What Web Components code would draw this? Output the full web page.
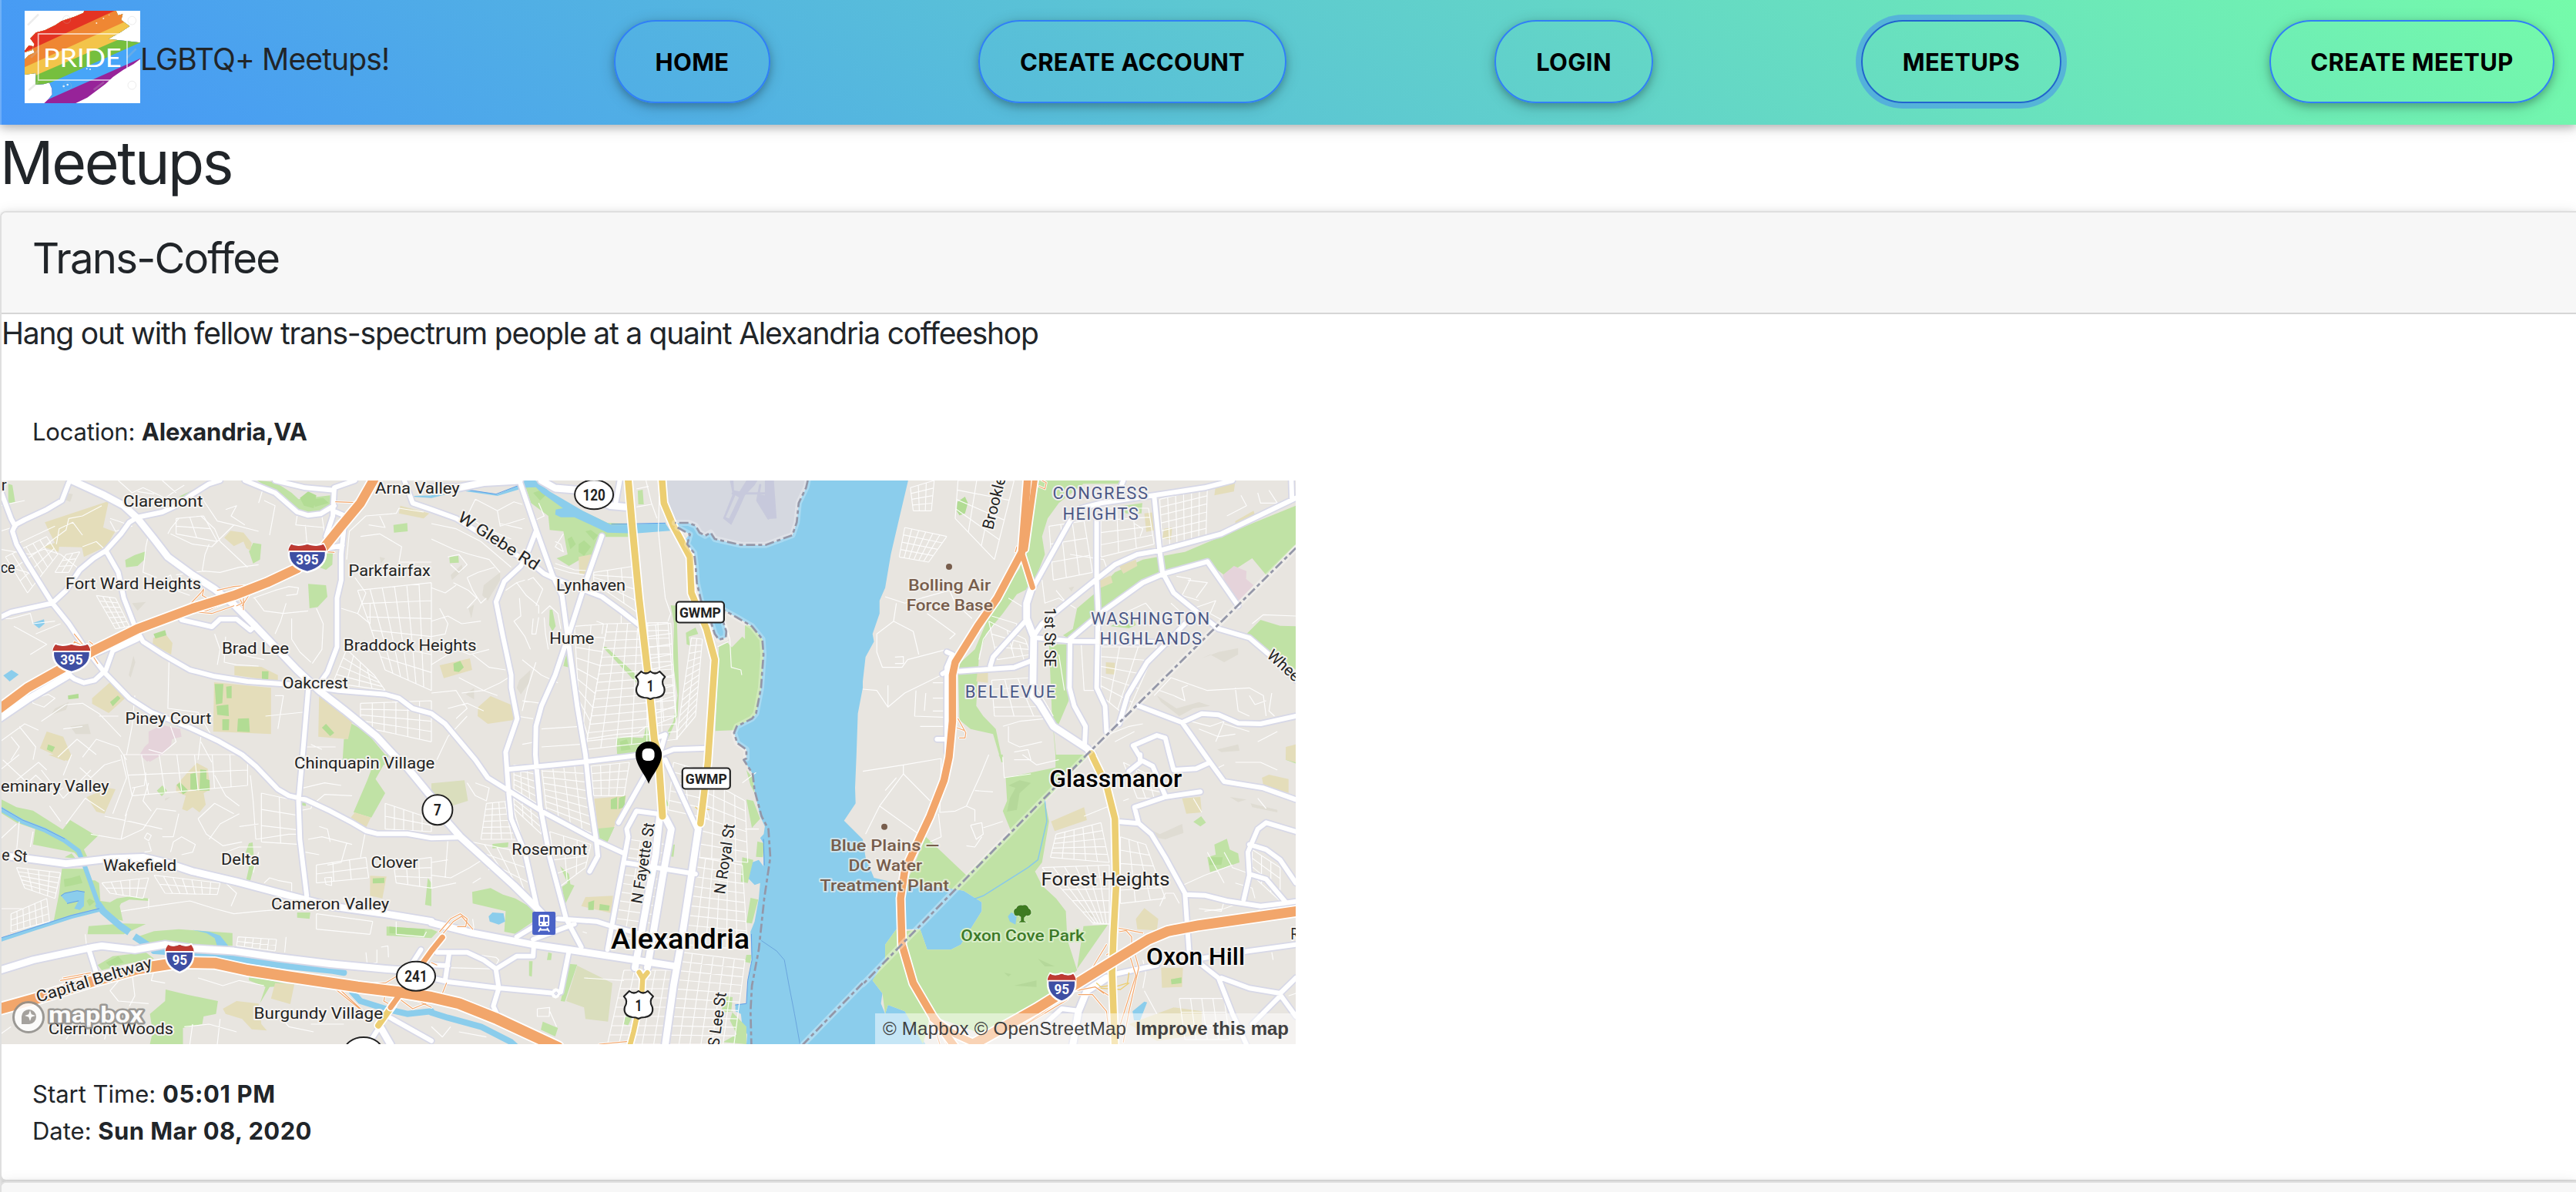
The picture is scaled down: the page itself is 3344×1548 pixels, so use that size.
<!DOCTYPE html>
<html lang="en">
<head>
<meta charset="utf-8">
<title>LGBTQ+ Meetups!</title>
<style>
html,body{margin:0;padding:0;height:1548px;overflow:hidden;background:#fff}
body{font-family:Inter,"Liberation Sans",sans-serif;font-size:31px;line-height:48px;color:#212529}
</style>
</head>
<body>
<meetups-app></meetups-app>
<script>
const define=(name,html,setup)=>customElements.define(name,class extends HTMLElement{
  constructor(){super();this.attachShadow({mode:'open'}).innerHTML=html;}
  connectedCallback(){if(setup)setup(this.shadowRoot,this);}
});

define('pride-logo',`<style>:host{display:block;width:150px;height:120px;flex:none}svg{display:block}</style>
<svg width="150" height="120" viewBox="96 42 450 360">
<defs><clipPath id="c"><path d="M328 42H452L460 60L478 55L472 78L505 102L470 125L422 152L480 158L546 166V230L520 250L480 272L440 300L410 328L380 350L340 380L295 402H172L190 385L203 368L202 345L192 322L170 328L138 330L140 285L96 291V232L112 215L135 205L128 190L134 172L118 150L140 127L175 118L215 98L240 82L290 65L325 50Z M96 198L112 178L128 180L126 195L96 204Z"/></clipPath></defs>
<rect x="96" y="42" width="450" height="360" fill="#fff"/>
<g clip-path="url(#c)"><rect x="96" y="42" width="450" height="360" fill="#972399"/>
<path d="M96 42H546V228L180 391L96 428Z" fill="#47a5f8"/><path d="M96 42H546V166L96 367Z" fill="#76bf3e"/>
<path d="M96 42H546V118L96 312Z" fill="#f3c44a"/><path d="M96 42H546V58L96 262Z" fill="#ef8733"/><path d="M96 42H446L96 203Z" fill="#e43323"/></g>
<g fill="#fff" opacity=".85"><circle cx="376" cy="90" r="3"/><circle cx="403" cy="72" r="3"/><circle cx="425" cy="58" r="2"/><circle cx="338" cy="268" r="3"/><circle cx="351" cy="270" r="3"/><circle cx="248" cy="336" r="4"/><circle cx="263" cy="330" r="4"/></g>
<g fill="none" stroke="#bbb" stroke-opacity=".28" stroke-width="3"><circle cx="514" cy="80" r="16"/><circle cx="514" cy="332" r="16"/><circle cx="260" cy="76" r="15"/><circle cx="262" cy="335" r="16"/><path d="M108 98L150 56M112 352L150 318M365 350L405 320M495 225L530 190M120 224L150 196" stroke-width="8"/></g>
<rect x="149" y="132" width="346" height="180" fill="none" stroke="#fff" stroke-opacity=".72" stroke-width="5"/>
<text x="168" y="260" font-family="Lato,sans-serif" font-size="101" font-weight="400" fill="#fff" textLength="304" lengthAdjust="spacingAndGlyphs">PRIDE</text>
</svg>`);

define('nav-pill',`<style>
:host{display:flex;box-sizing:border-box;height:108px;border:2px solid #307ff6;border-radius:54px;align-items:center;justify-content:center;color:#000;font-weight:700;font-size:31px;line-height:48px;letter-spacing:.3px;padding-top:2px;white-space:nowrap;box-shadow:0 4px 10px rgba(0,0,0,.2),0 4px 20px rgba(0,0,0,.18)}
:host([active]){border-color:#2164cf;box-shadow:0 0 0 7px rgba(66,133,244,.5)}
</style><slot></slot>`,(r,e)=>{e.style.width=e.getAttribute('width')+'px'});

define('site-nav',`<style>
:host{display:flex;box-sizing:border-box;height:162px;padding:0 28px 0 30px;border-left:2px solid rgba(255,255,255,.22);background:linear-gradient(40deg,#4596f8,#75fbaa) border-box;box-shadow:0 4px 10px rgba(0,0,0,.2),0 4px 20px rgba(0,0,0,.14);justify-content:space-between;align-items:flex-start;position:relative}
.brand{display:flex;padding-top:14px;font-size:39px;line-height:60px;letter-spacing:-.85px;white-space:nowrap}
.brand span{padding:33px 0 0 0;line-height:60px}
nav{display:flex;gap:270px;padding-top:26px}
</style>
<div class="brand"><pride-logo></pride-logo><span>LGBTQ+ Meetups!</span></div>
<nav><nav-pill width="203">HOME</nav-pill><nav-pill width="400">CREATE ACCOUNT</nav-pill><nav-pill width="206">LOGIN</nav-pill><nav-pill width="260" active>MEETUPS</nav-pill><nav-pill width="370">CREATE MEETUP</nav-pill></nav>`);

define('meetup-card',`<style>
:host{display:block;box-sizing:border-box;border:2px solid #dfdfdf;border-right:0;border-radius:8px 0 0 8px;background:#fff;box-shadow:0 4px 10px rgba(0,0,0,.16),0 4px 20px rgba(0,0,0,.12)}
header{box-sizing:border-box;height:132px;background:#f7f7f7;border-bottom:2px solid #d6d6d6;padding:26px 40px 0;border-radius:6px 0 0 0;font-size:54.5px;line-height:67px;letter-spacing:-1.8px}
</style><header><slot name="title"></slot></header><slot></slot>`);

/* Tiles of the street map: origin and scale of each drawing sheet. */
const T={a:[0,610,2.8],b:[560,610,2.8],c:[1120,610,2.75],d:[0,980,2.8],e:[560,980,2.8],f:[1120,980,2.75]};
const pt=(t,x,y)=>[+(T[t][0]+x/T[t][2]-2).toFixed(1),+(T[t][1]+y/3-624).toFixed(1)];
/* With split set, a change of tile also starts a new subpath. */
function P(s,split){let t='a',m=true,o='';for(const k of s.trim().split(/\s+/)){
  if(T[k]){t=k;if(split)m=true;}else if(k==='|')m=true;else if(k==='Z'){o+='Z';m=true;}
  else{const[x,y]=k.split(',').map(Number),q=pt(t,x,y);o+=(m?'M':'L')+q;m=false;}}return o;}
const fill=(c,s,joined)=>`<path d="${P(s,!joined)}" fill="${c}"/>`;
const line=(c,w,s,x='')=>`<path d="${P(s)}" fill="none" stroke="${c}" stroke-width="${w}" stroke-linejoin="round" stroke-linecap="round" ${x}/>`;
/* Street grid inside a quadrilateral, corners given clockwise. */
function grid(t,q,n,m){const c=q.split(' ').map(p=>pt(t,...p.split(',').map(Number)));let o='';
  const l=(a,b,k)=>[a[0]+(b[0]-a[0])*k,a[1]+(b[1]-a[1])*k].map(v=>v.toFixed(1));
  for(let i=0;i<=n;i++)o+='M'+l(c[0],c[1],i/n)+'L'+l(c[3],c[2],i/n);
  for(let j=0;j<=m;j++)o+='M'+l(c[0],c[3],j/m)+'L'+l(c[1],c[2],j/m);
  return `<path d="${o}"/>`;}
const PARK='#c0e2a5',PITCH='#b2dc94',SCHOOL='#e4ddba',WATER='#8bcdec',DIM='#dfdcd3';
const coastN='b 1368,42 1362,70 1335,130 1328,205 1312,255 1215,293 1125,293 1030,270 1015,245 995,257 975,245 960,218 935,207 885,207';
const coastM='b 895,225 940,252 930,290 955,325 960,370 965,440 980,510 1015,590 1030,640 1045,662 1070,655 1072,630 1060,590 1065,548 1110,575 1165,610 1203,660 1207,720 1198,850 1180,950 1165,970 1110,1000 1100,1025 1112,1065 1145,1090 1145,1125';
const land=[
 fill(WATER,coastN+' '+coastM+' e 1135,20 1168,75 1175,140 1195,240 1212,280 1208,310 1195,325 1210,350 1207,435 1190,410 1165,420 1150,480 1175,508 1195,500 1190,560 1175,650 1160,690 1165,800 1150,880 1145,970 1105,975 1105,1000 1125,1010 1130,1060 1148,1090 1145,1130 f 225,1130 150,1000 90,975 80,1010 65,970 70,930 35,880 80,800 80,740 120,680 205,680 230,760 315,760 350,740 425,610 425,575 360,530 305,520 120,500 40,480 10,400 0,330 e 1500,257 1542,190 1540,130 1545,0 b 1550,950 1568,850 c 0,825 10,730 40,670 35,640 60,560 60,510 80,460 100,330 130,190 162,42 Z',true),
 fill('#d5d8e0','b 855,42 1368,42 1362,70 1335,130 1328,205 1312,255 1215,293 1125,293 1030,270 1015,245 995,257 975,245 960,218 935,207 885,205 855,120 Z'),
 fill('#c7c9dc','b 1085,42 1095,95 1060,190 1090,215 1115,160 1140,100 1175,60 1185,42 1145,42 1120,85 1100,80 1098,42 Z | 1212,42 1245,42 1255,190 1225,192 1185,120 1190,95 1212,100 Z'),
 fill('#d5d8e0','b 1105,100 1118,108 1082,190 1070,185 Z'),
 line('#c7c9dc',3,'b 1095,92 1215,92 | 1195,60 1185,120 1225,190'),
 // parks
 fill(PARK,'a 30,55 45,60 55,125 30,132 | 935,42 1000,48 1060,90 1085,115 1200,100 1205,140 1165,165 1120,172 1080,160 1030,100 960,60 | 455,352 490,332 530,318 525,350 500,375 458,380 | 905,318 920,285 950,290 945,350 920,365 | 1120,445 1185,450 1190,495 1155,535 1125,540 | 1160,380 1180,330 1210,320 1208,370 1185,390 | 1270,985 1330,1020 1400,1110 1400,1150 1245,1140 1250,1050 1265,1045 | 1430,215 1480,208 1482,240 1432,245 | 650,105 720,70 755,48 730,80 680,110'),
 fill(PARK,'d 0,172 60,205 120,218 228,292 255,255 340,310 360,312 305,370 318,400 290,405 270,382 120,350 128,290 60,265 0,225 | 225,445 310,445 320,490 345,490 360,500 365,570 400,575 425,560 470,553 540,560 540,570 470,565 440,580 435,590 447,648 420,640 375,605 330,605 195,650 215,540 | 235,400 260,385 275,405 | 322,668 450,658 530,660 450,700 318,700 | 485,715 560,688 650,680 845,695 845,745 540,745 | 355,820 410,785 530,770 560,795 440,820 370,840 | 570,140 590,120 607,140 588,162 | 905,345 918,342 925,430 910,490 895,488 905,440 890,390 | 1370,0 1415,0 1365,95 1400,150 1350,245 1285,225 1335,100 | 1080,615 1128,615 1125,640 1080,635 | 1405,670 1568,680 1568,715 1405,705 | 1095,185 1112,185 1112,200 1098,198 | 1555,480 1568,500 1568,590 1545,585 | 602,915 680,935 792,960 785,1010 740,1020 735,1050 665,1065 665,1128 545,1128 555,1080 545,1010 600,960 | 905,862 1070,900 980,905 945,968 965,905 905,880'),
 fill(PARK,'b 320,42 375,42 470,120 640,207 715,210 715,262 630,262 580,350 540,350 500,375 455,345 495,330 480,240 430,235 425,180 362,130 345,75 | 750,82 768,78 772,135 752,135 | 430,545 440,545 452,610 440,630 428,605 | 925,635 960,615 970,640 935,650 940,685 928,680 | 870,528 895,530 893,600 900,860 895,960 855,1060 850,1035 880,980 895,880 878,750 882,600 | 1140,605 1165,610 1203,660 1207,720 1198,850 1180,950 1165,970 1110,1000 1100,1015 1032,1018 1045,690 1075,672 1092,692 1130,650 1140,660 | 622,690 635,690 745,800 745,830 | 672,1040 770,1045 782,995 800,1060 760,1110 675,1108 | 65,338 98,336 100,362 67,364 | 485,740 497,700 500,770 480,765'),
 fill(PARK,'e 148,535 215,520 260,545 305,560 370,600 370,650 305,698 265,690 270,610 150,580 | 0,680 22,690 0,715 | 500,815 530,818 485,962 470,960 | 425,770 438,775 435,800 420,800 | 355,805 368,805 365,865 355,862 | 405,1040 460,1065 450,1098 398,1072 | 468,435 500,465 505,505 520,510 485,585 475,515 495,500 | 222,348 280,342 278,360 222,365 | 605,288 665,282 640,340 610,325 | 865,352 885,350 880,398 862,395 | 853,170 865,200 855,200 | 1145,175 1170,180 1195,250 1165,285 | 1185,338 1210,345 1205,400 1180,398 | 1130,400 1170,410 1150,500 1125,495 | 1160,558 1188,565 1165,658 1145,655 | 1145,780 1163,780 1160,812 1140,808 | 1060,940 1095,945 1090,1000 1145,1060 1145,1128 1060,1120 1110,1090 1085,1035 1095,1000 1055,1005 | 1145,60 1168,90 1175,150 1160,120 | 705,1015 730,1020 715,1055 700,1050'),
 fill(PARK,'c 630,42 920,42 918,55 788,55 700,130 660,190 640,260 650,330 605,455 550,485 500,560 440,640 415,720 405,920 430,960 475,1010 500,1140 495,1140 465,1030 385,1010 345,975 340,760 400,700 470,520 560,385 575,330 | 905,145 998,130 995,170 940,170 | 1546,140 1546,290 1440,410 1390,345 1340,380 1290,410 1240,370 1225,365 1080,405 980,445 860,560 740,660 715,645 750,620 765,540 830,480 900,400 1000,350 1150,320 1400,205 | 1370,640 1420,585 1490,608 1546,610 1546,780 1450,710 | 885,610 960,560 975,605 950,618 | 665,680 735,680 735,900 700,990 680,1000 690,1110 790,1140 690,1140 675,950'),
 fill(PARK,'f 485,0 500,0 498,30 | 688,0 790,0 800,10 745,70 650,180 665,260 640,420 615,455 640,510 690,560 725,610 730,720 765,840 640,960 430,1090 230,1010 160,850 140,690 205,680 230,760 315,760 350,740 425,610 425,575 360,530 305,520 160,490 225,320 370,470 530,300 500,220 515,180 510,90 688,50 | 35,880 80,800 80,740 120,680 150,800 240,1020 215,1128 150,1000 90,975 80,1010 70,930 | 788,668 875,662 765,835 | 1180,262 1208,240 1225,265 1205,280 | 1255,350 1300,328 1310,370 1340,385 1345,420 1240,458 1230,400 1260,390 | 1510,0 1546,0 1546,35 1510,20'),
 // pitches and darker lawns
 fill(PITCH,'a 865,970 905,968 908,1022 862,1020 | 247,880 285,873 286,890 248,895 | 1090,110 1120,85 1150,100 1140,150 1105,140 | 1135,115 1175,110 1195,130 1145,145'),
 fill(PITCH,'d 1415,670 1545,680 1540,705 1415,695 | 232,485 260,480 290,470 300,500 260,510 235,515 | 315,570 325,560 345,572 325,590 | 385,810 430,785 450,810 400,825 b 370,90 395,80 415,100 395,120 | 495,270 510,260 525,290 505,310 | 535,290 555,275 580,300 555,335 535,320 | 560,240 580,235 605,255 590,275 | 685,1060 710,1050 725,1090 690,1095'),
 fill(PITCH,'c 338,125 365,105 375,130 365,170 345,178 335,160 | 885,590 970,600 950,615 f 1237,400 1285,400 1280,430 1237,430'),
 // schools, dry land
 fill(SCHOOL,'a 163,205 395,122 375,225 418,242 385,300 305,340 298,302 215,300 213,320 155,300 200,285 178,240 | 815,265 838,238 885,245 915,285 910,315 895,305 885,280 850,298 | 557,655 605,645 627,675 622,720 555,680 | 852,765 950,768 1010,800 1010,825 852,800 | 778,828 985,850 985,1030 775,1020 | 335,890 400,828 455,890 395,948 335,912 | 170,1020 230,1040 260,1115 245,1135 145,1085 | 1160,870 1220,910 1280,980 1265,1050 1157,1040 | 1455,140 1560,170 1540,190 1450,170'),
 fill(SCHOOL,'d 640,120 690,60 715,32 755,55 765,135 740,150 748,195 725,225 700,205 680,220 662,212 675,160 640,145 | 315,165 395,130 420,135 380,230 350,222 | 175,0 260,0 235,25 | 1290,225 1348,245 1330,285 1275,245 | 1345,472 1405,475 1390,560 1345,550 | 1000,890 1070,895 1055,972 985,950 | 810,990 860,960 940,970 950,1050 970,1075 915,1070 880,1030 820,1010'),
 fill(SCHOOL,'b 30,762 140,735 148,780 45,812 | 170,925 215,882 300,920 300,975 205,990 168,960 | 535,340 580,330 590,355 560,410 538,405 e 592,172 708,160 695,210 640,335 600,300 600,240 | 560,555 660,550 655,618 545,590'),
 fill(SCHOOL,'c 1260,60 1330,42 1325,85 1255,100 | 1005,170 1045,165 1045,235 1012,242 | 1075,230 1105,225 1100,272 1070,268 | 1330,200 1395,160 1405,195 1330,222 | 915,375 975,350 980,375 930,405 | 840,435 885,412 892,440 850,460 | 868,750 900,752 898,798 868,795 | 410,785 447,785 447,830 405,825 | 1510,1080 1546,1070 1546,1140 1510,1130 f 672,260 790,205 800,255 685,298 | 1140,170 1205,165 1210,225 1155,230 | 975,640 1005,598 1055,640 1050,685 980,680 | 1065,830 1143,830 1140,905 1068,908 | 1425,90 1450,78 1520,95 1520,150 1430,120 | 950,1050 1110,985 1210,1000 1210,1090 1050,1115'),
 fill(PITCH,'d 692,75 715,70 718,140 692,135 | 728,58 750,60 750,95 762,100 762,140 725,140 | 642,118 655,108 685,140 665,155 | 1355,482 1397,480 1397,500 1355,502 a 558,640 600,625 605,645 565,658 | 952,785 976,785 975,818 952,818 | 400,905 428,880 438,890 410,922 | 1170,1005 1185,990 1215,1025 1200,1038 | 175,1070 200,1080 190,1100 170,1090 | 780,835 812,835 808,910 785,915 | 822,845 842,842 842,890 824,890 | 787,920 830,915 832,960 790,955 | 808,972 833,972 832,1015 808,1015 | 865,970 905,968 908,1022 862,1020 b 80,755 105,745 118,770 100,788 82,785 e 652,175 675,165 675,212 652,212 | 682,168 705,160 702,205 680,212 | 570,575 592,568 590,605 570,605 | 612,582 648,588 645,608 610,605 f 1100,875 1138,868 1138,890 1102,895'),
 fill(PARK,'e 605,288 665,282 640,340 610,325'),
 fill('#dadebd','e 0,112 120,100 133,180 60,205 0,195 | 530,822 658,890 642,1040 560,1030 555,985 490,960'),
 fill('#e5d3da','a 540,1020 590,995 655,1010 660,1040 625,1050 622,1075 590,1110 545,1138 508,1110 525,1080 540,1065 c 1285,410 1325,375 1370,395 1368,425 1395,450 1340,515 1300,470 d 508,0 560,0 535,28'),
 fill(DIM,'a 235,90 265,95 255,125 230,115 | 200,930 250,905 240,935 185,955 | 485,725 492,750 475,810 468,800 | 255,1000 320,990 330,1030 275,1030 | 1380,340 1400,345 1385,365 | 480,520 530,515 500,550 b 70,410 110,370 115,390 75,430 | 190,450 250,400 250,430 205,510 185,490 | 320,820 360,780 355,830 325,875 310,850 | 135,540 155,525 145,580 | 125,875 155,850 155,895 d 600,170 620,165 600,180 c 1210,735 1270,710 1340,695 1340,720 1290,750 1240,720 | 1050,880 1120,930 1200,905 1240,920 1180,930 1130,960 1065,905 | 735,460 755,455 745,475 | 1265,1090 1340,1070 1345,1095 1280,1100'),
 fill('#b5d89a','f 520,120 560,100 600,110 560,150 550,215 515,222 525,170 545,130 | 505,850 530,855 520,865 | 540,900 620,880 620,905 | 625,795 685,825 650,825'),
 fill(DIM,'f 995,275 1060,310 1140,270 1145,305 1080,330 1030,320 | 1310,165 1370,175 1340,185 | 1385,190 1480,215 1480,225 1390,205 | 770,580 835,635 810,630'),
 // small water
 fill(WATER,'a 118,598 160,583 162,600 142,618 | 12,802 42,780 68,798 35,825 | 1505,102 1568,100 1568,110 1505,106 b 0,98 110,75 240,95 320,60 325,42 378,42 430,85 550,160 655,215 850,208 868,238 740,248 640,245 520,185 470,185 450,175 452,155 478,150 400,90 380,68 340,70 240,102 110,82 0,110 | 920,275 935,255 945,262 930,285 d 222,550 235,540 280,530 307,535 305,590 290,605 270,600 285,570 245,580 | e 208,630 222,615 262,618 268,650 245,662 212,650 f 518,630 530,615 550,625 545,662 525,650 | 963,1000 1005,962 1015,965 990,1035 968,1035'),
 line('#5f9ee8',1,'b 110,75 235,95 320,60 | 655,212 850,208 | 940,252 930,290 955,325 | d 222,550 235,540 280,530 307,535 | 245,580 285,570 | e 1163,700 1165,800 1150,880 1145,970 1105,975 | 1207,330 1210,430'),
 line(WATER,6,'d 0,210 80,260 165,295 235,335 285,375 310,440 340,530 360,590'),
 line(WATER,9,'d 355,580 375,610 440,670 470,692','style="stroke-linecap:butt"'),line(WATER,9,'d 488,708 540,745 570,765','style="stroke-linecap:butt"'),
 line(WATER,5,'d 0,722 120,680 260,632 360,605'),
 line('#6ba2e8',1,'d 0,204 80,254 165,290 235,328 | 0,715 120,675 260,626 360,600'),
 line(WATER,8,'d 560,765 700,775 850,795 1050,825 1210,842 1250,850 | 1280,925 1310,960 1400,990 1480,1010 1568,1000 e 0,1005 60,1025 180,1060 290,1120 320,1150'),
 fill(WATER,'d 700,683 760,690 800,705 830,745 790,748 780,715 750,695'),
 line('#88c8ea',1.5,'f 650,180 657,260 625,410 590,440 430,550 400,562'),
 line('#6aa5dd',1,'e 1200,725 1255,765 1283,800 1300,900 1320,1010 1340,1130')
].join('');

const small=`a 430,42 480,90 520,70 600,110 640,80 670,60 | 500,85 560,95 | 590,42 640,90 | 620,250 700,290 770,300 850,215 940,240 | 730,180 780,230 800,280 850,330 900,380 | 610,250 620,230 650,190 | 740,120 790,200 870,220 | 820,155 860,140 840,180 890,215 | 980,255 1000,140 960,120 | 940,130 960,60 990,90 | 1080,180 1075,215 1175,225 | 1110,215 1115,280 | 1170,180 1180,250 | 640,410 700,400 740,395 800,400 870,380 940,370 | 735,395 745,330 760,290 | 590,430 620,410 640,470 690,490 | 1040,520 1020,590 1000,640 | 925,500 960,550 1030,560 1120,550 | 1150,540 1175,600 1170,700 1135,755 | 1060,580 1060,660 1090,710 1130,750 | 920,500 1000,470 1050,455 1085,460 1080,485 1040,490 | 1260,350 1270,240 1330,180 1440,170 1450,150 1540,165 | 1310,260 1380,250 1460,300 1450,360 1568,360 | 1340,215 1400,225 1380,180 | 1290,420 1330,480 1300,560 1240,540 | 1345,520 1345,600 1300,560 | 615,720 610,930 720,945 765,1030 | 780,640 800,700 790,760 | 820,650 815,750 860,760 940,765 | 870,720 960,740 | 1000,880 1030,880 1010,1010 | 965,960 1100,945 | 490,880 480,1000 460,1110 | 110,880 120,910 160,925 200,890 175,875 145,885 | 0,1060 90,990 140,1015 | 40,1040 70,1080 40,1130 | 70,1000 130,1080 120,1130 | 150,980 240,915 300,910 360,950 440,1040 | 210,1120 280,1050 350,1110 | 230,1010 300,1000 | 300,1120 350,1050 430,1080 460,1130 | 360,960 430,960 | 540,1090 590,1105 640,1060 620,1000 | 0,580 40,580 110,560 120,600 200,590 | 50,610 170,680 110,720 | 130,640 220,600 | 0,310 110,330 160,310 220,330 280,380 | 0,370 100,400 140,430 | 60,290 200,220 | 170,290 240,235 250,190 300,180 370,140 | 205,290 215,230 265,205 300,255 | 300,300 350,280 380,310 | 400,190 430,200 480,220 420,240 400,200 | 0,240 60,220 | 0,140 90,120 | 1100,1080 1220,1080 | 730,1060 770,1140 | 720,1130 730,1040 | 1130,1070 1170,1090 | 545,230 530,300 520,400 570,420
 b 160,115 130,180 200,230 290,270 | 160,115 240,160 300,125 330,135 | 240,160 250,220 340,190 | 250,210 330,230 | 0,210 90,230 180,280 290,380 | 0,270 80,310 140,330 210,350 250,400 | 60,340 100,330 130,370 100,400 70,370 | 130,420 170,400 230,380 | 130,420 150,470 180,520 200,500 | 80,440 135,470 165,500 130,540 | 0,460 50,480 90,450 | 0,590 60,570 110,600 180,590 | 30,540 60,600 50,640 0,650 | 270,470 310,440 345,490 390,530 390,560 | 310,440 340,430 | 350,430 370,420 405,465 380,530 | 320,500 325,570 300,590 340,650 360,700 | 370,580 365,640 380,640 390,575 | 410,575 415,640 425,700 | 400,560 430,530 460,560 470,620 | 0,760 90,700 140,720 210,700 | 150,720 210,770 270,780 | 330,740 400,800 460,830 | 380,750 350,850 330,940 | 100,810 190,860 250,830 280,810 | 110,870 190,860 240,880 | 0,870 90,860 130,930 90,970 | 60,930 130,910 190,940 | 330,900 400,910 | 310,960 370,970 | 330,1070 380,1060 | 20,1130 60,1040 130,960 | 440,380 500,400 560,410 | 450,365 520,390 590,395 | 390,130 410,180 370,200 | 480,250 450,300 480,320 470,290 450,280 | 830,42 825,240 850,500 870,560 860,590 | 780,42 800,130 820,190 | 745,75 790,65 | 745,145 800,135 | 1065,590 1085,660 1090,770 1125,780 1128,800 | 1080,670 1040,690 | 620,640 625,600 600,590 | 690,540 690,600 | 560,1050 680,1030 750,1025 780,1000 | 400,1080 540,1070 | 400,1010 540,1000
 c 0,855 50,860 90,925 150,870 300,790 | 90,840 90,925 | 80,495 150,520 210,500 310,470 330,520 390,580 | 120,520 110,590 50,640 50,710 70,770 140,770 160,740 300,700 | 110,590 180,630 200,720 | 230,560 280,600 330,640 310,660 | 115,730 145,728 145,755 115,755 | 190,860 185,960 300,965 | 205,1000 290,1000 | 225,870 220,940 | 250,830 290,830 | 250,890 290,890 | 250,940 290,940 | 500,1000 560,980 650,970 | 540,1100 590,1090 600,1130 540,1130 | 520,1000 520,1060 560,1080 640,1060 | 460,570 550,600 530,700 | 520,500 580,540 | 415,740 430,660 470,600 | 560,680 575,740 | 1120,415 1170,425 1140,490 1200,510 | 1160,430 1230,440 1190,500 | 1180,540 1260,510 1240,560 1290,590 | 1100,520 1180,600 | 930,560 1010,520 1070,600 | 640,430 650,520 700,500 760,540 | 690,470 720,510 | 780,680 790,860 830,860 | 1040,880 1100,810 1230,860 1380,850 1430,880 1440,960 | 1060,860 1110,880 1150,900 1140,850 1160,840 | 1330,850 1340,940 1380,960 | 1380,880 1400,915 1440,900 | 1460,870 1450,940 1470,960 | 1170,980 1240,1000 1290,980 1260,1060 | 1290,990 1380,1020 | 1200,1010 1270,1040 1330,1030 | 1410,1060 1480,1020 | 1350,100 1370,140 1300,180 | 1410,90 1420,130 1480,130 1450,80 | 970,210 1000,230 990,260 | 880,1030 950,1000 1000,990 | 900,1060 970,1020 | 740,330 860,350 870,380 | 1390,600 1430,565 1546,570 | 700,720 720,860
 d 0,60 70,0 | 10,20 100,110 130,80 200,150 230,130 | 60,100 140,30 170,60 | 230,80 260,0 | 290,50 330,90 380,40 440,20 | 150,60 230,170 330,60 | 180,200 220,260 | 240,270 310,170 380,220 | 60,270 0,330 | 70,260 60,380 | 120,300 110,360 | 380,240 470,260 590,290 | 440,0 460,90 410,230 | 460,230 440,330 330,310 | 490,130 455,240 | 540,110 520,180 550,220 | 530,70 525,120 480,130 | 440,330 520,290 570,210 640,220 | 535,305 550,315 540,335 525,325 535,305 | 540,340 550,375 525,380 | 620,380 630,340 660,320 710,350 700,380 660,390 | 650,230 630,320 590,320 | 720,250 780,190 850,230 | 720,250 750,310 810,355 880,340 | 760,330 800,270 870,230 | 910,80 920,180 930,330 | 870,280 940,270 | 930,330 1050,310 1080,310 | 950,360 870,360 820,380 | 780,80 820,160 870,200 | 1080,220 1130,210 1140,180 | 1100,130 1180,110 1240,120 | 1130,200 1180,155 1280,160 | 1160,280 1190,290 1200,340 | 1110,380 1160,390 | 1120,330 1170,320 1280,350 | 1260,345 1240,420 1190,430 | 1330,290 1310,400 | 960,500 980,480 1010,490 1060,500 1060,540 | 820,500 860,540 840,590 | 440,610 560,590 690,570 780,600 850,620 940,610 1000,605 | 540,560 540,600 | 0,600 80,600 | 310,700 315,750 | 1040,710 1035,770 | 1330,770 1335,820 1370,810 1370,760 | 1385,750 1410,745 1412,790 | 720,870 810,900 870,880 960,900 | 560,840 550,880 600,890 | 440,870 400,920 430,960 540,970 | 480,850 490,940 470,980 | 240,1110 270,1060 340,1100 | 0,1090 40,1060 | 380,1110 400,1030 480,1060 | 700,1050 690,1128 | 670,1060 760,1050 860,1080 | 1010,1010 1050,1060 1140,1080 | 800,1030 790,1128 | 1130,1050 1250,1050 | 1180,480 1205,478 1205,510 1185,505 1180,480 | 1440,650 1440,700 1540,710 1550,690 | 920,460 940,380
 e 130,110 160,160 200,180 210,130 160,110 | 60,330 50,480 | 0,470 70,480 140,440 | 0,520 90,500 | 140,440 200,400 210,450 | 150,500 180,480 | 150,640 155,680 | 170,780 235,790 245,800 230,830 | 55,830 240,835 | 385,990 430,985 428,1020 385,1020 385,990 | 430,1000 455,1060 | 550,690 565,695 | 0,1060 40,1100 70,1060 | 100,1080 200,1100 | 555,870 700,880 | 1140,290 1190,290 | 1180,70 1130,110 | 0,420 60,410
 f 0,65 145,40 280,15 | 145,40 145,75 60,200 200,310 | 145,75 240,180 | 80,140 120,90 | 60,200 10,310 | 280,15 275,225 330,220 370,200 400,215 400,260 | 370,200 420,80 450,0 | 400,140 465,145 | 385,275 425,265 430,310 405,330 385,275 | 430,285 500,260 | 425,320 400,360 370,355 | 270,230 280,320 240,340 | 500,10 505,90 600,75 | 570,0 620,40 700,20 | 820,660 880,660 | 880,200 790,240 | 930,180 950,172 | 1140,510 1220,470 1320,430 | 1290,380 1320,440 1370,460 | 1230,380 1290,500 | 1220,610 1290,600 1340,580 | 1060,590 1080,540 1110,540 1130,580 | 1000,910 1010,850 1000,800 | 1005,920 1050,1010 | 1290,570 1280,610 1200,600 | 1330,500 1390,520 1400,560 | 1410,610 1450,580 | 1270,50 1290,40 | 1330,30 1420,30 1480,60 | 1410,170 1440,210 | 1180,170 1210,225 | 1460,770 1465,800 | 1520,940 1546,930`;
const minor=`<g fill="none" stroke="#fff" stroke-width="1.2" stroke-linejoin="round" opacity=".92">`+[
 grid('b','640,600 860,595 895,1050 560,1090',6,15),grid('b','520,610 640,600 560,1090 540,980',2,9),
 grid('b','590,400 740,375 755,560 590,440',3,4),grid('b','760,610 870,598 890,960 800,1000',2,9),grid('b','945,655 985,660 960,960 890,1050',2,13),
 grid('e','880,30 960,55 1010,250 860,215',2,5),grid('e','990,90 1140,180 1150,420 975,400',4,6),grid('e','970,400 1130,430 1150,760 920,740',6,9),
 grid('e','910,770 1140,800 1100,1128 860,1128',6,10),grid('e','700,840 890,840 850,1128 640,1128',5,8),grid('e','715,330 850,350 790,760 650,740',3,12),
 grid('e','200,190 290,180 330,330 180,330',4,6),grid('e','300,40 370,45 400,310 300,210',3,9),grid('e','400,40 560,40 590,310 420,230',4,8),
 grid('e','430,300 580,350 560,440 460,520',3,4),grid('e','100,330 330,380 370,560 220,440',5,3),grid('e','580,45 720,30 700,160 590,160',4,4),
 grid('c','170,70 255,42 245,160 180,160',3,4),grid('c','150,225 300,260 235,360 130,340',6,4),grid('c','340,42 540,42 470,350 330,190',3,4),
 grid('c','1060,115 1230,70 1225,260 1070,300',6,6),grid('c','850,150 1020,150 1040,290 850,340',3,4),grid('c','665,220 790,200 820,400 680,430',3,3),
 grid('c','850,690 1050,690 940,960 850,880',3,5),grid('c','450,590 580,660 600,720 480,740',2,3),grid('c','460,820 600,810 680,960 470,960',3,4),
 grid('f','690,310 850,265 880,420 670,400',5,5),grid('f','640,440 880,430 880,660 820,655',6,5),grid('f','920,320 1010,350 1080,560 920,580',3,5),
 grid('f','930,30 1060,100 1070,170 980,170',3,3),grid('f','1390,370 1490,440 1490,570 1390,470',3,3),grid('f','1130,950 1290,950 1310,1110 1150,1110',4,3),
 grid('a','1300,470 1568,440 1568,860 1400,780',6,6),grid('a','1260,700 1360,800 1400,860 1210,830',4,4),grid('a','350,490 420,500 470,610 420,620',3,6),
 grid('a','20,340 170,260 210,330 100,480',6,3),grid('a','240,330 290,320 250,400 200,400',2,3),grid('a','1310,910 1568,900 1568,1060 1310,1000',6,4),
 grid('a','640,190 740,180 790,280 640,250',2,2),grid('d','60,440 220,460 200,560 90,520',4,5),grid('d','40,620 170,560 180,650 40,690',6,3),
 grid('d','370,500 540,480 520,560 400,540',5,2),grid('d','560,470 800,500 790,545 600,540',7,2),grid('d','865,710 1005,720 1000,765 860,745',5,2),
 grid('d','1150,620 1355,650 1345,700 1150,680',1,1),grid('d','1150,430 1330,400 1340,480 1150,500',3,2),grid('d','1430,420 1568,400 1568,520 1440,500',3,3),
 grid('d','450,0 900,0 900,120 480,160',7,2),grid('d','950,150 1080,180 1090,350 950,340',2,3),grid('d','1400,190 1568,250 1568,300 1400,290',5,2),
 `<path d="${P(small,true)}"/>`
].join('')+'</g>';

const wide=[
 'a 262,42 380,100 450,140 500,190 560,270 610,340 700,410 780,465 850,525 920,600 1000,690 1080,780 1160,860 1250,935 1370,1040 1430,1110 d 1480,50 1568,165 e 60,265 105,320 300,510 385,600 420,640',
 'd 0,392 100,405 240,425 400,405 520,400 600,420 700,455 860,495 1000,535 1200,590 1400,620 1568,650 e 0,655 150,695 370,740 500,760 740,800 890,825',
 'e 970,290 945,470 905,750 880,900 850,1130','e 830,240 815,390 740,830','e 850,245 872,290 840,480 785,830',
 'd 0,840 120,800 340,750 370,745 490,760 600,740 700,755 850,765 1010,790 1200,815 1400,835 1460,840',
 'c 600,470 585,520 585,580 610,650 607,880 630,910 680,1000 800,1085 820,1110','a 0,968 100,895 250,800',
 'b 0,70 100,70 190,50 320,42 | 400,42 450,72 540,80 | 600,110 650,140 705,145','f 870,870 800,920 770,1000 750,1130','d 1385,1065 1420,1130'];
const mid=[
 'a 250,50 225,120 170,155 90,195 55,215 45,240 60,290 100,365 190,520 250,600 300,680 380,790 470,890 550,945 690,1005 790,1055 880,1110 d 930,45 1010,135 1050,160 1110,175 1200,220 1280,265 1330,297 1370,308 1480,308 1568,325 e 100,322',
 'a 0,575 40,555 190,520 240,470 290,390 340,345 385,315 440,250 470,205 500,185 590,165 640,140 700,95 760,55 800,42',
 'a 385,315 430,400 450,500 490,610 520,670 600,725 690,780 780,805 900,825 1100,840 1230,860 1400,875 1450,890 1500,930 1568,950 b 50,990 160,1130 e 205,90 400,220 600,335 700,385',
 'a 890,42 1000,90 1080,165 1120,178 1165,172 1215,140','a 1000,42 1110,70 1215,80 | 1290,42 1215,70 1210,180 1185,260','a 1255,180 1240,330 1240,430 1225,500 1225,690 1190,790 1150,850 | 1120,860 1100,1110 d 1085,180 1090,330 1115,550',
 'a 0,75 40,190 55,220','a 245,795 270,815 305,830 345,820 385,780 410,705 500,660','a 660,585 770,612 800,582 860,582 910,625 930,605','a 330,725 500,645 | 1170,310 1245,295 | 1210,160 1255,180',
 'a 1470,42 1500,130 1568,155 b 90,190 240,290 370,370 410,405 450,425 510,450 620,495 690,550 755,605','b 320,42 380,230 440,410 475,490 490,610 500,690 530,920 560,1110 e 575,160 600,340 605,395 575,455',
 'b 380,240 355,310 325,375 265,435 235,515 260,650 290,800 290,850 312,970 270,1100 e 280,140 290,250 340,380 385,600','b 620,258 560,440 500,640 450,800 400,920 380,1000 378,1110 e 395,200 430,400 490,640 545,750',
 'b 670,130 685,42','e 275,58 450,40 560,28 770,0 | 780,75 680,265','b 830,1110 880,1090 1000,1085 | 830,1040 850,1032 835,1090','e 850,20 970,300','e 820,230 745,220 710,290 715,320 640,760 | 700,420 960,465',
 'e 460,640 600,650 660,670 900,740 | 310,710 380,665 | 370,720 520,660','e 500,765 470,925 450,930 250,910 60,885 0,870 | 20,770 130,770 190,800 235,835 310,785 370,785 372,745 | 65,770 50,880 | 235,840 245,910 225,980 240,1015 | 0,820 60,822',
 'd 320,750 350,850','d 1410,1020 1568,1115 | 1380,1060 1350,1110 | 1500,810 1530,760',
 'c 1320,42 1220,70 1040,100 850,130 780,150 740,200 610,455 | 930,42 915,85','c 1546,110 1280,250 1060,315 980,330 900,370 830,430 700,545 640,600 615,640','c 1040,100 1060,320 1070,400 1110,480 1200,560 1270,620 1380,655 1450,720 1546,820',
 'c 1340,530 1230,358 1075,405 1000,440 860,550 740,660','c 835,190 835,430 840,550 835,850 865,920 870,1020','c 620,655 750,668 1050,672 | 740,670 738,850 755,920 795,1000 792,1075','c 1150,600 1080,680 1015,750 945,880 915,990',
 'c 600,745 540,770 345,785 | 455,765 465,730 580,590 | 300,710 320,720 300,770 300,1100 | 265,1050 295,1050 | 285,795 300,785','c 985,920 1140,985 1210,950 1270,955 1340,988 1420,990 1546,960 | 1140,985 1240,1140 f 1290,105 1430,130 1546,175',
 'c 1530,42 1532,110','c 965,1075 1050,1035 1080,1045 1095,1110 f 1110,60 1190,55 1240,30 | 990,0 990,30 950,65 | 1000,25 1035,45 1080,160 | 1205,145 1080,165 970,205 985,268','c 965,1075 990,1120 f 990,10',
 'f 920,262 985,268 1030,310 1080,400 1150,540 1165,770 | 1150,545 1220,548 1300,570 1420,590 1500,580 1546,572 | 1360,565 1380,470 1375,380 1410,290 1440,265 1546,300 | 1380,350 1440,370 1490,410 1546,500 | 1380,465 1440,485 1510,575',
 'f 1546,740 1380,765 1200,795 | 900,855 1050,820 | 1200,810 1270,870 1320,1010 1370,1130 | 1280,870 1380,910 1490,930 1546,870 | 1490,935 1546,1020 | 1490,940 1390,1050','f 640,1060 710,990 770,998'];
const orange=[['a 0,930 100,850 250,760 340,705 500,620 700,540 850,490 970,440 1080,385 1180,300 1240,220 1310,130 1360,36',12],
 ['d 0,990 150,945 330,885 500,835 650,810 780,812 900,840 1050,865 1300,905 1450,925 1568,945 e 100,970 240,1030 400,1110 460,1140',14],['d 1420,985 1568,765 e 40,712',7],
 ['c 588,36 568,320 480,500 410,610 330,750 320,800 320,980 308,1120 f 290,100 240,240 150,450 135,560 140,740 180,890 250,1020 330,1140',9.5],['c 615,36 580,310 | 568,325 606,458',7],
 ['f 1560,608 1200,665 1090,688 1020,720 900,800 760,895 620,990 400,1125',13],['f 250,1030 330,1090 400,1125',8]];
const yellow=[['b 715,36 730,220 755,500 785,780 810,1050 825,1110 e 840,240',9],['b 838,36 845,130 880,220 940,340 945,480 1000,620 1030,740 1020,900 1005,1140 e 978,268',8.5],['e 755,848 768,872 785,850 | 768,872 765,930 735,1080 720,1140',6.5],
 ['d 1375,1055 1428,975',8],['c 815,1105 820,1115 f 822,12 870,120 900,250 905,500 895,700 890,850 900,1140',8.5]];
const ramps='a 690,525 730,480 740,465 | 740,470 735,490 760,505 | 700,540 750,550 830,515 | 720,555 770,560 850,530 | 790,470 850,455 910,450 | 870,500 880,520 860,530 | 885,490 885,545 | 880,530 910,480 960,450 | 270,640 300,680 | 265,690 270,670 300,685 | 325,670 350,690 | 340,730 355,755 | 1220,125 1290,128 1320,110 | 1205,235 1230,200 1260,180 | 1170,290 1210,235 | 1190,320 1215,322 | d 230,870 330,850 | 220,880 320,860 | 1210,905 1330,1010 | 1230,910 1320,1000 | 1360,890 1400,890 1440,865 | 1395,960 1400,935 1440,940 1420,975 1395,960 | 1440,940 1520,960 1568,985 | 1450,950 1500,990 1568,960 | e 30,690 70,640 105,620 130,640 125,670 95,670 | 40,700 80,650 110,630 150,680 | 0,810 20,820 | 55,890 40,930 | 240,1020 400,1100 | 250,1020 430,1110 | 610,1128 710,1118 | c 640,42 655,50 650,75 630,65 | 340,970 368,1025 365,1045 345,1045 | 335,1005 360,1015 | 545,320 550,300 | f 910,675 1000,695 | 915,690 940,685 960,710 960,760 | 870,740 820,830 | 900,760 870,780 | 970,770 985,830 950,1000 930,1120 | 955,790 975,860 920,1050 | 760,920 830,905 880,940 | 770,935 820,935 870,1000 880,1100 | 740,930 570,1060 | 730,955 540,1080 | 830,905 860,930 | 260,1040 300,1128 | 245,1020 275,1128';
const roads=line('#d7d8e7',9.5,mid.join(' | '))+line('#d7d8e7',12.5,wide.join(' | '))+line('#fff',6,mid.join(' | '))+line('#fff',8.8,wide.join(' | '))
 +line('#fff',3,ramps)+line('#f2a66b',1.2,ramps)+line('#ecce72',1.3,'f 835,890 850,905 880,900 | 950,850 945,890 900,905 | 850,910 920,915 950,890 | e 960,205 975,220 990,210 1010,215')
 +yellow.map(([s,w])=>line('#fff',w+3.5,s)).join('')+yellow.map(([s,w])=>line('#ecce72',w,s)).join('')
 +orange.map(([s,w])=>line('#fff',w+3.5,s)).join('')+orange.map(([s,w])=>line('#f2a66b',w,s)).join('')
 +fill('#fff','e 435,930 442,915 452,910 465,915 470,930 462,945 452,950 440,945 Z')+line('#d7d8e7',1.5,'e 448,930 454,925 458,930 453,936 448,930')
 +line('#fff',5,'b 618,258 619,259');
const bd='stroke-dasharray="12 4 5 4" style="stroke-linecap:butt"';
const border=line('#fff',8,'c 1546,305 800,1110 f 0,895 e 1568,890 1350,1130','opacity=".3"')
 +line('#9497a8',2.8,'c 1546,305 800,1110 f 0,895 e 1568,890 1350,1130',bd)
 +line('#fff',8,coastN+' | '+coastM,'opacity=".25"')+line('#9497a8',2.7,coastN+' | '+coastM+' e 1135,20 1168,75 1175,140 1200,240 1225,290 1232,400 1210,560 1190,760 1165,900 1160,1000 1163,1130',bd);

function lab(t,s,x0,y,x1,o={}){const[a,b]=pt(t,x0,y),w=o.len||(x1-x0)/T[t][2];
 return `<text x="${a}" y="${b}" font-size="${o.s||20.5}" font-weight="${o.w||400}" fill="${o.c||'#222'}" ${o.clip?'':`textLength="${w.toFixed(1)}" lengthAdjust="${o.a||'spacingAndGlyphs'}"`} ${o.r?`transform="rotate(${o.r} ${a} ${b})"`:''} stroke="${o.h||'#f4f2ef'}" >${s}</text>`;}
const B={s:22,c:'#4b5886',a:'spacing',h:'#f0eff0'},R={s:21,w:500,c:'#775d4c',h:'rgba(244,242,239,.6)'},C={w:500,s:31,c:'#000'};
const labels=[
 lab('a','r',5,80,20,{clip:1}),lab('a','Claremont',448,143,737),lab('a','ce',2,403,55),lab('a','Fort Ward Heights',238,466,731),lab('a','Parkfairfax',1267,415,1565),
 lab('a','Arna Valley',1364,93,1671),lab('a','Brad Lee',806,716,1050),lab('a','Braddock Heights',1249,705,1732),lab('a','Oakcrest',1027,852,1265),lab('a','Piney Court',455,990,768),
 lab('b','W Glebe Rd',92,196,0,{len:121,r:33}),lab('b','Lynhaven',454,471,706),lab('b','Hume',429,678,592),
 lab('d','Chinquapin Village',1070,54,1580),lab('d','eminary Valley',3,143,396),lab('d','e St',5,410,98,{r:5}),lab('d','Wakefield',375,453,642),lab('d','Delta',804,430,944),lab('d','Clover',1348,441,1520),lab('d','Cameron Valley',986,603,1415),
 lab('d','Capital Beltway',138,965,0,{len:156,r:-17}),lab('d','Clermont Woods',176,1088,630),lab('d','Burgundy Village',923,1029,1392),
 lab('e','Rosemont',292,391,566),lab('e','N Fayette St',765,583,0,{len:106,r:-81}),lab('e','N Royal St',1067,546,0,{len:92,r:-82}),lab('e','S Lee St',1044,1140,0,{len:71,r:-82}),
 lab('e','Alexandria',652,755,1157,{w:500,s:36,c:'#000'}),
 lab('c','Brookle',464,236,0,{len:70,r:-76}),lab('c','1st St SE',650,538,0,{len:77,r:90}),lab('c','Whee',1440,728,0,{len:50,r:42}),
 lab('c','CONGRESS',678,115,1018,B),lab('c','HEIGHTS',714,194,984,B),lab('c','WASHINGTON',814,602,1238,B),lab('c','HIGHLANDS',846,681,1210,B),lab('c','BELLEVUE',365,888,688,B),
 lab('c','Bolling Air',162,471,457,R),lab('c','Force Base',156,549,464,R),
 lab('e','Blue Plains —',1450,375,1846,R),lab('e','DC Water',1516,453,1784,R),lab('e','Treatment Plant',1413,531,1882,R),
 lab('f','Glassmanor',666,127,1139,C),lab('f','Forest Heights',637,509,1096,{s:24.5}),lab('f','Oxon Hill',1012,818,1364,C),lab('f','Oxon Cove Park',350,726,791,{s:21,w:500,c:'#3c7a28',h:'#d9edc9'}),lab('f','R',1528,720,1556)
].join('');

const at=(t,x,y,s)=>{const p=pt(t,x,y);return `<g transform="translate(${p})">${s}</g>`;};
const num=(n,y,s,c,w)=>`<text class="n" x="0" y="${y}" font-size="${s}" fill="${c}" text-anchor="middle" textLength="${w}" lengthAdjust="spacingAndGlyphs">${n}</text>`;
const inter=(n,w)=>`<path d="M${-w} -8C${-w-1} -12 ${-w+1} -15 ${-w+3} -19Q${-w/2} -15 0 -19Q${w/2} -15 ${w-3} -19C${w-1} -15 ${w+1} -12 ${w} -8C${w+1} 4 ${w-5} 13 0 18C${-w+5} 13 ${-w-1} 4 ${-w} -8Z" fill="#3f4fa3" stroke="#fff" stroke-width="2.4" stroke-linejoin="round"/><path d="M${-w} -8.5C${-w-1} -12 ${-w+1} -15 ${-w+3} -18Q${-w/2} -14 0 -18Q${w/2} -14 ${w-3} -18C${w-1} -15 ${w+1} -12 ${w} -8.5Z" fill="#be3a32"/><path d="M${-w} -9H${w}" stroke="#fff" stroke-width="1.8"/>`+num(n,8,19,'#fff',n.length*9.8);
const oval=(n,w,h=19)=>`<ellipse rx="${w}" ry="${h}" fill="#fff" stroke="#202020" stroke-width="2"/>`+(n?num(n,7.5,20,'#222',n.length*9.8):'');
const us=`<path d="M-12 -18Q-6 -13 0 -18Q6 -13 12 -18L19 -11Q13 -5 18 3Q20 14 8 16Q3 16 0 18Q-3 16 -8 16Q-20 14 -18 3Q-13 -5 -19 -11Z" fill="#fff" stroke="#222" stroke-width="2.2" stroke-linejoin="round"/>`+num('1',8,20,'#222',9);
const box=`<rect x="-31" y="-13.5" width="62" height="27" rx="4" fill="#fff" stroke="#222" stroke-width="2.2"/>`+num('GWMP',7,19,'#222',54);
const signs=[
 at('a',1117,345,inter('395',24)),at('a',260,735,inter('395',24)),at('d',653,795,inter('95',18)),at('f',710,908,inter('95',18)),
 at('b',591,97,oval('120',25)),at('e',22,215,oval('7',19.5,19.5)),at('d',1512,863,oval('241',25)),at('d',1321,1158,oval('',25)),
 at('b',796,840,us),at('e',753,975,us),at('b',977,555,box),at('e',999,93,box),
 at('e',409,657,`<rect x="-15" y="-15" width="30" height="30" rx="2" fill="#4a62c6"/><rect x="-7" y="-11" width="14" height="15" rx="2.5" fill="#fff"/><path d="M-5 -8H-1V-2H-5ZM1 -8H5V-2H1Z" fill="#4a62c6"/><circle cx="-4" cy="1" r="1.2" fill="#4a62c6"/><circle cx="4" cy="1" r="1.2" fill="#4a62c6"/><path d="M-4 6L-7 11M4 6L7 11M-5 8.5H5" stroke="#fff" stroke-width="1.8"/>`),
 at('c',308,378,'<circle r="4" fill="#775d4c"/>'),at('f',77,281,'<circle r="4" fill="#775d4c"/>'),
 at('f',570,620,'<path d="M-11 -1Q-12 -6 -8 -7Q-6 -12 0 -11Q6 -13 8 -7Q12 -5 11 0Q8 4 5 2L2 5V9L5 11H-5L-2 9V4L-5 2Q-10 4 -11 -1Z" fill="#3e7b21" stroke="#d9edc9" stroke-width="1.6" paint-order="stroke"/>'),
 at('b',790,1110,'<path d="M0 38C-3 28 -17 14 -17 0A17 17 0 0 1 17 0C17 14 3 28 0 38Z" fill="#000"/><rect x="-8.5" y="-8" width="16" height="16" rx="6" fill="#fff"/>')
].join('');
const brand=`<g transform="translate(35 697)" opacity=".86"><circle r="19.5" fill="#fff" stroke="#8f8d89" stroke-width="3"/><path d="M-9 9V-1A9.5 9.5 0 1 1 1 9Z" fill="#9a9793"/><path d="M2 -9L3.8 -3.8L9 -2L3.8 -.2L2 5L.2 -.2L-5 -2L.2 -3.8Z" fill="#fff"/>
<text x="26" y="7" font-size="29" font-weight="700" font-family="Lato,sans-serif" fill="#fff" stroke="#8f8d89" style="stroke-width:5" textLength="123" lengthAdjust="spacingAndGlyphs">mapbox</text></g>`;

define('street-map',`<style>
:host{display:flex;width:1680px;height:732px;overflow:hidden;position:relative;background:#e8e5e0}
svg{display:block;flex:none}
text{font-family:Roboto,"Liberation Sans",sans-serif;paint-order:stroke;stroke-width:4px;stroke-linejoin:round}
.n{font-weight:700;stroke:none}
.attr{position:absolute;right:0;bottom:0;display:flex;justify-content:space-between;box-sizing:border-box;width:546px;height:40px;padding:1px 9px 0 10px;background:rgba(255,255,255,.5);font:24px/37px "Liberation Sans",sans-serif;color:#404040;white-space:nowrap}
.attr span{letter-spacing:.25px}
</style><svg width="1680" height="732" viewBox="0 0 1680 732"><g>${land}</g>${minor}${roads}${border}${labels}${signs}${brand}</svg>
<div class="attr"><span>© Mapbox © OpenStreetMap</span><b>Improve this map</b></div>`);

define('meetups-app',`<style>
:host{display:flex;flex-direction:column;height:1548px;overflow:hidden}
site-nav,h1,meetup-card{flex:none}
h1{margin:0;height:112px;box-sizing:border-box;padding-top:1px;font-weight:400;font-size:77px;line-height:96px;letter-spacing:-2.4px}
p{margin:0}
.desc{height:84px;box-sizing:border-box;padding-top:2px;font-size:39px;line-height:46px;letter-spacing:-1.22px}
.loc{height:132px;box-sizing:border-box;padding:45px 40px 0;letter-spacing:-.2px}
.when{height:176px;box-sizing:border-box;padding:41px 40px 0}
.when b{letter-spacing:.4px}
.when .t{letter-spacing:.65px}
</style>
<site-nav></site-nav>
<h1>Meetups</h1>
<meetup-card><span slot="title">Trans-Coffee</span>
<p class="desc">Hang out with fellow trans-spectrum people at a quaint Alexandria coffeeshop</p>
<p class="loc">Location: <b>Alexandria,VA</b></p>
<street-map></street-map>
<div class="when"><p>Start Time: <b class="t">05:01 PM</b></p><p>Date: <b>Sun Mar 08, 2020</b></p></div>
</meetup-card>
<meetup-card></meetup-card>`);
</script>
</body>
</html>
